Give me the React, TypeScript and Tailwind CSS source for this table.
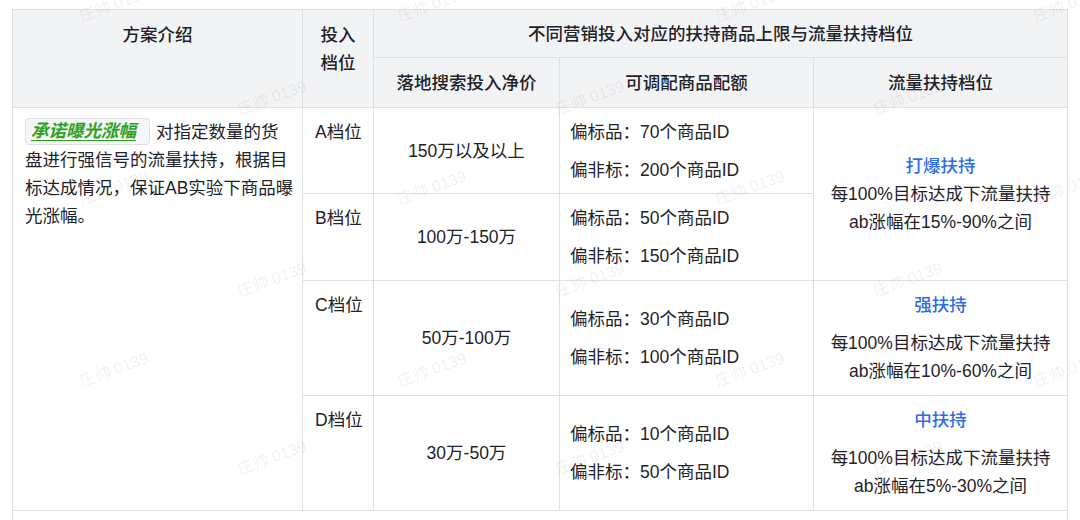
import React from "react";

const border = "border border-[#dee0e3]";
const th = `${border} bg-[#f2f3f5] font-medium text-[#1f2329]`;
const td = `${border} bg-white text-[#1f2329]`;

function Tier({ title, lines, gap }: { title: string; lines: string[]; gap: boolean }) {
  return (
    <div className="text-center">
      <p className={`font-medium text-[#2f6cea] ${gap ? "mb-[10px]" : ""}`}>{title}</p>
      {lines.map((l) => (
        <p key={l}>{l}</p>
      ))}
    </div>
  );
}

function Quota({ a, b }: { a: string; b: string }) {
  return (
    <div className="flex flex-col gap-[10px]">
      <p>偏标品：{a}个商品ID</p>
      <p>偏非标：{b}个商品ID</p>
    </div>
  );
}

function Watermark({ cls }: { cls: string }) {
  return (
    <span
      className={`absolute -translate-x-1/2 -translate-y-1/2 -rotate-20 whitespace-nowrap text-[16px] text-black/[0.07] ${cls}`}
    >
      庄帅 0139
    </span>
  );
}

export default function App() {
  return (
    <div
      className="relative w-[1080px] h-[520px] overflow-hidden bg-white text-[17.5px] leading-[28px]"
      style={{ fontFamily: '"Liberation Sans", "Noto Sans CJK SC", sans-serif' }}
    >
      <div className="pt-[9px] pl-[12px]">
        <table className="table-fixed border-collapse w-[1055px]">
          <colgroup>
            <col className="w-[290px]" />
            <col className="w-[71px]" />
            <col className="w-[186px]" />
            <col className="w-[254px]" />
            <col className="w-[254px]" />
          </colgroup>
          <tbody>
            <tr className="h-[48px]">
              <th rowSpan={2} className={`${th} align-top pt-[11px] px-[12px] text-center`}>
                方案介绍
              </th>
              <th rowSpan={2} className={`${th} align-top pt-[11px] px-[12px] text-center`}>
                投入档位
              </th>
              <th colSpan={3} className={`${th} align-middle px-[12px] text-center`}>
                不同营销投入对应的扶持商品上限与流量扶持档位
              </th>
            </tr>
            <tr className="h-[50px]">
              <th className={`${th} align-middle px-[12px] text-center`}>落地搜索投入净价</th>
              <th className={`${th} align-middle px-[12px] text-center`}>可调配商品配额</th>
              <th className={`${th} align-middle px-[12px] text-center`}>流量扶持档位</th>
            </tr>
            <tr className="h-[86px]">
              <td rowSpan={4} className={`${td} align-top pt-[10px] pl-[12px] pr-[8px]`}>
                <span className="inline-block rounded-[4px] border border-[#dee0e3] bg-[#f5f6f7] pl-[5px] pr-[13px] leading-[25px] mr-[6px] align-[1px]">
                  <span className="font-bold italic text-[#2ea121] underline decoration-[#2ea121] underline-offset-[3px]">
                    承诺曝光涨幅
                  </span>
                </span>
                对指定数量的货盘进行强信号的流量扶持，根据目标达成情况，保证AB实验下商品曝光涨幅。
              </td>
              <td className={`${td} align-top pt-[10px] pl-[12px] pr-[2px] whitespace-nowrap`}>A档位</td>
              <td className={`${td} align-middle px-[12px] text-center`}>150万以及以上</td>
              <td className={`${td} align-middle px-[10px]`}>
                <Quota a="70" b="200" />
              </td>
              <td rowSpan={2} className={`${td} align-middle px-[12px]`}>
                <Tier title="打爆扶持" lines={["每100%目标达成下流量扶持", "ab涨幅在15%-90%之间"]} gap={false} />
              </td>
            </tr>
            <tr className="h-[87px]">
              <td className={`${td} align-top pt-[10px] pl-[12px] pr-[2px] whitespace-nowrap`}>B档位</td>
              <td className={`${td} align-middle px-[12px] text-center`}>100万-150万</td>
              <td className={`${td} align-middle px-[10px]`}>
                <Quota a="50" b="150" />
              </td>
            </tr>
            <tr className="h-[115px]">
              <td className={`${td} align-top pt-[10px] pl-[12px] pr-[2px] whitespace-nowrap`}>C档位</td>
              <td className={`${td} align-middle px-[12px] text-center`}>50万-100万</td>
              <td className={`${td} align-middle px-[10px]`}>
                <Quota a="30" b="100" />
              </td>
              <td className={`${td} align-middle px-[12px]`}>
                <Tier title="强扶持" lines={["每100%目标达成下流量扶持", "ab涨幅在10%-60%之间"]} gap />
              </td>
            </tr>
            <tr className="h-[115px]">
              <td className={`${td} align-top pt-[10px] pl-[12px] pr-[2px] whitespace-nowrap`}>D档位</td>
              <td className={`${td} align-middle px-[12px] text-center`}>30万-50万</td>
              <td className={`${td} align-middle px-[10px]`}>
                <Quota a="10" b="50" />
              </td>
              <td className={`${td} align-middle px-[12px]`}>
                <Tier title="中扶持" lines={["每100%目标达成下流量扶持", "ab涨幅在5%-30%之间"]} gap />
              </td>
            </tr>
            <tr className="h-[48px]">
              <td colSpan={5} className={`${td}`}></td>
            </tr>
          </tbody>
        </table>
      </div>

      <div className="pointer-events-none absolute inset-0">
        <Watermark cls="left-[114px] top-[5px]" />
        <Watermark cls="left-[432px] top-[5px]" />
        <Watermark cls="left-[750px] top-[5px]" />
        <Watermark cls="left-[1068px] top-[5px]" />
        <Watermark cls="left-[272px] top-[98px]" />
        <Watermark cls="left-[590px] top-[98px]" />
        <Watermark cls="left-[908px] top-[98px]" />
        <Watermark cls="left-[114px] top-[188px]" />
        <Watermark cls="left-[432px] top-[188px]" />
        <Watermark cls="left-[750px] top-[188px]" />
        <Watermark cls="left-[1068px] top-[188px]" />
        <Watermark cls="left-[272px] top-[280px]" />
        <Watermark cls="left-[590px] top-[280px]" />
        <Watermark cls="left-[908px] top-[280px]" />
        <Watermark cls="left-[114px] top-[370px]" />
        <Watermark cls="left-[432px] top-[370px]" />
        <Watermark cls="left-[750px] top-[370px]" />
        <Watermark cls="left-[1068px] top-[370px]" />
        <Watermark cls="left-[272px] top-[458px]" />
        <Watermark cls="left-[590px] top-[458px]" />
        <Watermark cls="left-[908px] top-[458px]" />
      </div>
    </div>
  );
}
